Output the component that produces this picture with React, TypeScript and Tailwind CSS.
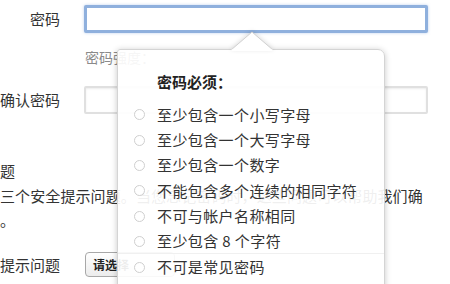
import React from "react";

const items = [
  "至少包含一个小写字母",
  "至少包含一个大写字母",
  "至少包含一个数字",
  "不能包含多个连续的相同字符",
  "不可与帐户名称相同",
  "至少包含 8 个字符",
  "不可是常见密码",
];

export default function App() {
  return (
    <div
      className="relative w-[450px] h-[284px] overflow-hidden bg-white text-[#333]"
      style={{ fontFamily: '"Noto Sans CJK SC", "Noto Sans", sans-serif' }}
    >
      <div className="pt-[5px]">
        <div className="flex items-center h-[28px]">
          <div className="w-[60px] text-right text-[15px] leading-[20px]">密码</div>
          <div className="ml-[24px] w-[344px] h-[28px] border-[3px] border-[#8fb0dd] rounded-[2px] bg-white shadow-[0_0_3px_rgba(120,160,220,0.5)]" />
        </div>
        <div className="mt-[14px] ml-[85px] text-[14px] leading-[20px] text-[#8a8a8a]">密码强度：</div>
        <div className="mt-[19px] flex items-center h-[28px]">
          <div className="w-[60px] text-right text-[15px] leading-[20px] whitespace-nowrap">确认密码</div>
          <div className="ml-[24px] w-[344px] h-[28px] border-[2px] border-[#e0e0e0] rounded-[2px] bg-white shadow-[inset_0_1px_2px_rgba(0,0,0,0.08)]" />
        </div>
        <div className="mt-[47px] text-[15px] leading-[20px]">题</div>
        <div className="mt-[3px] text-[15px] leading-[24px] whitespace-nowrap tracking-[0.1px]">
          <div>三个安全提示问题。当您忘记密码时，这些问题可以帮助我们确</div>
          <div>。</div>
        </div>
        <div className="mt-[20px] flex items-center h-[25px]">
          <div className="w-[60px] text-[15px] leading-[20px] whitespace-nowrap">提示问题</div>
          <div className="ml-[25px] w-[90px] h-[25px] border border-[#a8a8a8] rounded-[4px] bg-gradient-to-b from-white to-[#ececec] flex items-center px-[7px] text-[12px] font-bold text-[#222]">
            请选择
          </div>
        </div>
      </div>

      <div className="absolute left-[117px] top-[49px] w-[268px] h-[250px] rounded-tl-[3px] rounded-tr-[7px] bg-white/[0.92] border border-[#d4d4d4] shadow-[0_1px_6px_rgba(0,0,0,0.22)]">
        <div className="pt-[22px] pl-[39px] text-[15px] leading-[20px] font-bold text-[#222]">密码必须：</div>
        <div className="mt-[10px]">
          {items.map((t, i) => (
            <div
              key={i}
              className={
                "flex items-center h-[25.4px] " +
                (i === 5 ? "border-b border-[#f0f0f0]" : "")
              }
            >
              <div className="ml-[16px] w-[11px] h-[11px] rounded-full border border-[#cfcfcf] bg-white" />
              <div className="ml-[12px] text-[15px] leading-[20px] tracking-[0.4px] text-[#333] whitespace-nowrap">{t}</div>
            </div>
          ))}
        </div>
      </div>

      <svg
        className="absolute left-[231px] top-[31px] drop-shadow-[0_-1px_2px_rgba(0,0,0,0.12)]"
        width="42"
        height="20"
        viewBox="0 0 42 20"
      >
        <polygon points="0,19 21,1 42,19" fill="#ffffff" />
        <polyline points="0,19 21,1 42,19" fill="none" stroke="#d0d0d0" strokeWidth="1" />
        <rect x="0.5" y="18.5" width="41" height="2" fill="#ffffff" />
      </svg>
    </div>
  );
}
